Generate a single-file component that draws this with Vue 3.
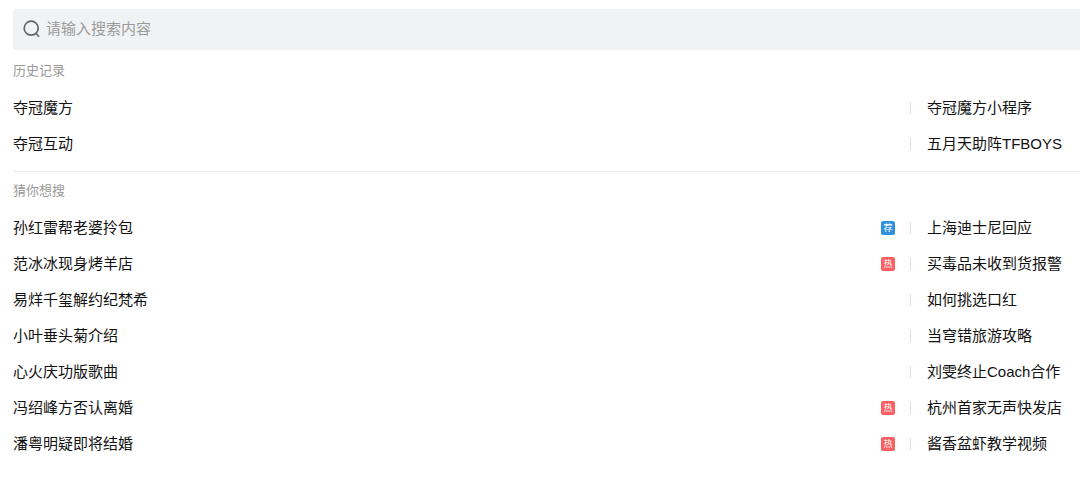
<script setup>
import { ref } from 'vue'

const keyword = ref('')

const groups = [
  {
    title: '历史记录',
    rows: [
      [{ text: '夺冠魔方' }, { text: '夺冠魔方小程序' }],
      [{ text: '夺冠互动' }, { text: '五月天助阵TFBOYS' }],
    ],
  },
  {
    title: '猜你想搜',
    rows: [
      [{ text: '孙红雷帮老婆拎包', tag: '荐' }, { text: '上海迪士尼回应' }],
      [{ text: '范冰冰现身烤羊店', tag: '热' }, { text: '买毒品未收到货报警' }],
      [{ text: '易烊千玺解约纪梵希' }, { text: '如何挑选口红' }],
      [{ text: '小叶垂头菊介绍' }, { text: '当穹错旅游攻略' }],
      [{ text: '心火庆功版歌曲' }, { text: '刘雯终止Coach合作' }],
      [{ text: '冯绍峰方否认离婚', tag: '热' }, { text: '杭州首家无声快发店' }],
      [{ text: '潘粤明疑即将结婚', tag: '热' }, { text: '酱香盆虾教学视频' }],
    ],
  },
]
</script>

<template>
  <main class="page">
    <label class="search">
      <svg class="search-icon" viewBox="0 0 18 18" aria-hidden="true">
        <circle cx="8.2" cy="8.2" r="7" />
        <path d="M12.6 13 L16 16.8" />
      </svg>
      <input v-model="keyword" class="search-input" type="text" placeholder="请输入搜索内容" aria-label="搜索" />
    </label>

    <section v-for="group in groups" :key="group.title" class="group">
      <h2 class="title">{{ group.title }}</h2>
      <ul class="list">
        <li v-for="(row, i) in group.rows" :key="i" class="row">
          <div v-for="item in row" :key="item.text" class="cell">
            <a class="link" href="#">{{ item.text }}</a>
            <span v-if="item.tag" class="tag" :class="{ recommend: item.tag === '荐' }">{{ item.tag }}</span>
          </div>
        </li>
      </ul>
    </section>
  </main>
</template>

<style>
body {
  margin: 0;
  background: #fff;
}
</style>

<style scoped>
.page {
  padding: 9px 0 24px 13px;
  font-family: "Liberation Sans", "Noto Sans CJK SC", sans-serif;
  color: #111;
}

.search {
  display: flex;
  align-items: center;
  gap: 5px;
  box-sizing: border-box;
  height: 41px;
  padding: 0 0 2px 10px;
  border-radius: 4px 0 0 4px;
  background: #f1f2f4;
}

.search-icon {
  flex: none;
  width: 18px;
  height: 18px;
  fill: none;
  stroke: #666;
  stroke-width: 1.7;
}

.search-input {
  flex: 1;
  min-width: 0;
  height: 24px;
  padding: 0;
  border: 0;
  outline: 0;
  background: transparent;
  font: inherit;
  font-size: 15px;
  color: #111;
}

.search-input::placeholder {
  color: #9b9b9b;
  opacity: 1;
}

.group {
  padding: 9px 0;
}

.group:nth-of-type(1) {
  padding-top: 11px;
}

.group + .group {
  border-top: 1px solid #ebebeb;
}

.title {
  margin: 0 0 9px;
  font-size: 13px;
  font-weight: 400;
  line-height: 20px;
  color: #999;
}

.list {
  margin: 0;
  padding: 0;
  list-style: none;
}

.row {
  display: grid;
  grid-template-columns: minmax(0, 1fr) 170px;
  align-items: center;
  height: 36px;
}

.cell {
  display: flex;
  align-items: center;
  justify-content: space-between;
  min-width: 0;
  padding-right: 15px;
}

.cell + .cell {
  height: 12px;
  padding: 0 0 0 16px;
  border-left: 1px solid #ddd;
}

.link {
  font-size: 15px;
  line-height: 24px;
  color: inherit;
  text-decoration: none;
  white-space: nowrap;
}

.tag {
  width: 14px;
  height: 14px;
  border-radius: 2px;
  background: #fa5f62;
  font-size: 9px;
  line-height: 14px;
  text-align: center;
  color: #fff;
}

.recommend {
  background: #3291dc;
}
</style>
